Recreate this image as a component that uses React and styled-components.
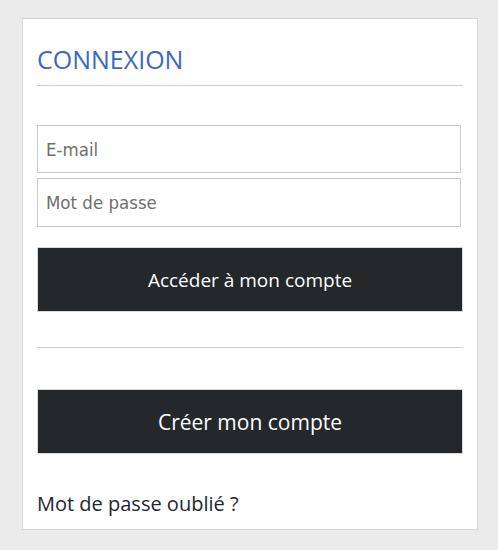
import React from "react";
import styled, { createGlobalStyle } from "styled-components";

const GlobalStyle = createGlobalStyle`
  html, body {
    margin: 0;
    padding: 0;
    background: #ebebeb;
  }
  * {
    box-sizing: border-box;
  }
`;

const Page = styled.div`
  padding: 18px 0 0 22px;
  min-height: 550px;
`;

const Card = styled.div`
  width: 456px;
  height: 512px;
  background: #ffffff;
  border: 1px solid #d6d6d6;
  padding: 24px 14px 0 14px;
  display: flex;
  flex-direction: column;
  font-family: "Open Sans", "Liberation Sans", sans-serif;
`;

const Title = styled.h2`
  margin: 0;
  font-size: 25px;
  font-weight: 400;
  line-height: 32px;
  color: #3b69c0;
  padding-bottom: 10px;
  border-bottom: 1px solid #d0d0d0;
`;

const Form = styled.form`
  display: flex;
  flex-direction: column;
  margin: 39px 0 0 0;
`;

const Field = styled.input`
  width: 424px;
  height: ${({ $h }) => $h || 48}px;
  border: 1px solid #cccccc;
  padding: 0 8px;
  font-family: "DejaVu Sans Condensed", "Liberation Sans", sans-serif;
  font-size: 18.5px;
  color: #333;
  outline: none;
  margin-bottom: ${({ $gap }) => $gap}px;
  &::placeholder {
    color: #6f6f6f;
  }
`;

const DarkButton = styled.button`
  width: 426px;
  height: 65px;
  background: #25282b;
  border: 1px solid #d8d8d8;
  color: #ffffff;
  font-family: "Open Sans", "Liberation Sans", sans-serif;
  font-size: ${({ $size }) => $size}px;
  cursor: pointer;
`;

const Divider = styled.hr`
  margin: ${({ $top }) => $top}px 0 ${({ $bottom }) => $bottom}px 0;
  border: 0;
  border-top: 1px solid #d0d0d0;
  width: 426px;
`;

const Forgot = styled.a`
  margin-top: 36px;
  font-size: 20px;
  color: #1d2633;
  text-decoration: none;
  line-height: 28px;
`;

export default function App() {
  return (
    <>
      <GlobalStyle />
      <Page>
        <Card>
          <Title>CONNEXION</Title>
          <Form onSubmit={(e) => e.preventDefault()}>
            <Field type="email" placeholder="E-mail" $gap={5} />
            <Field type="password" placeholder="Mot de passe" $h={49} $gap={20} />
            <DarkButton type="submit" $size={19}>
              Accéder à mon compte
            </DarkButton>
          </Form>
          <Divider $top={35} $bottom={41} />
          <DarkButton type="button" $size={21}>
            Créer mon compte
          </DarkButton>
          <Forgot href="#">Mot de passe oublié ?</Forgot>
        </Card>
      </Page>
    </>
  );
}
